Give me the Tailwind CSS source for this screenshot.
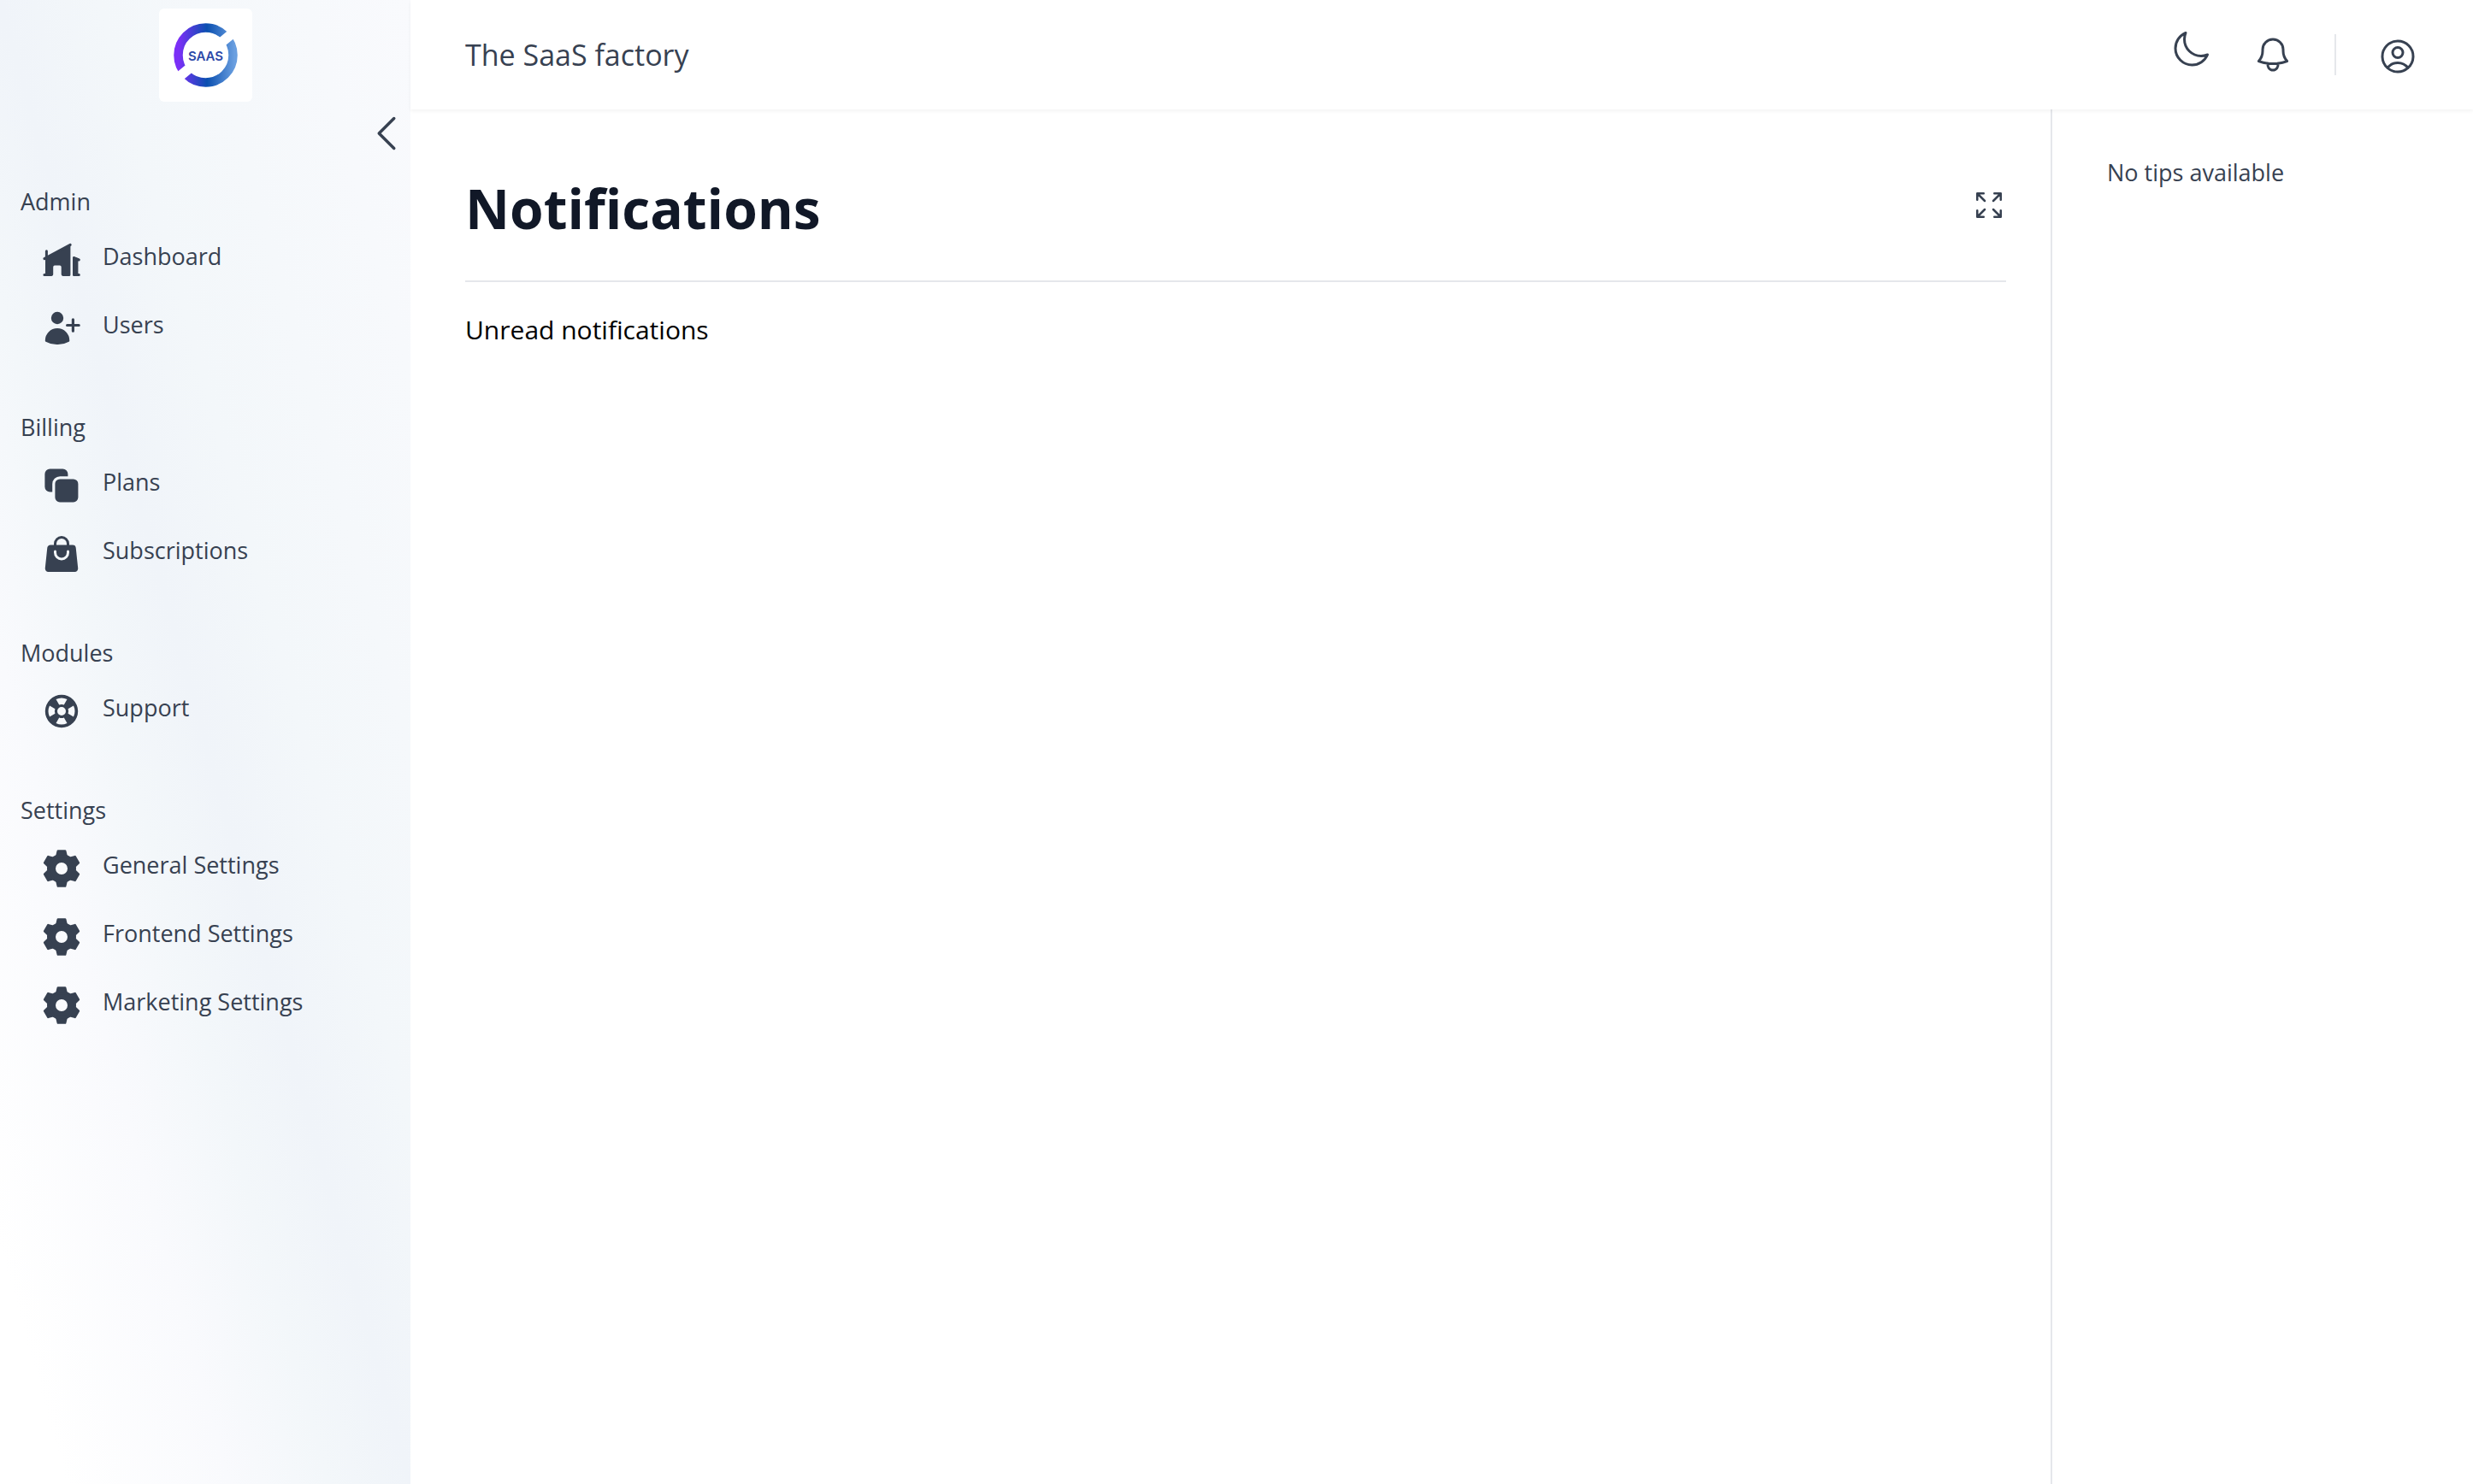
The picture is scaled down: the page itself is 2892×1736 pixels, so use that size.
<!DOCTYPE html>
<html lang="en">
<head>
<meta charset="utf-8">
<meta name="viewport" content="width=device-width, initial-scale=1">
<title>Notifications - The SaaS factory</title>
<script src="https://cdn.jsdelivr.net/npm/@tailwindcss/browser@4"></script>
</head>
<body class="bg-white font-['Open_Sans','Noto_Sans',sans-serif] text-[27px] leading-10 text-[#374151]">
<svg class="hidden" aria-hidden="true">
  <symbol id="gear" viewBox="-12 -12 24 24">
    <circle r="6" fill="none" stroke="currentColor" stroke-width="5"/>
    <g fill="currentColor" stroke="currentColor" stroke-width="1.2" stroke-linejoin="round">
      <path id="tooth" d="M-2.1-10.3H2.1L2.9-7H-2.9Z"/>
      <use href="#tooth" transform="rotate(60)"/>
      <use href="#tooth" transform="rotate(120)"/>
      <use href="#tooth" transform="rotate(180)"/>
      <use href="#tooth" transform="rotate(240)"/>
      <use href="#tooth" transform="rotate(300)"/>
    </g>
  </symbol>
</svg>
<div class="flex min-h-screen">
  <aside class="w-[480px] shrink-0 bg-[linear-gradient(to_top_right,#fff_8%,#f9fafd_28%,#f3f7fa_40%,#f0f4f9_50%,#f3f7fa_62%,#f9fafd_100%)]">
    <div class="flex h-32 items-center justify-center">
      <a href="#" aria-label="SaaS home" class="block size-[109px] rounded-md bg-white">
        <svg viewBox="0 0 109 109" class="size-full">
          <defs>
            <linearGradient id="ring" gradientUnits="userSpaceOnUse" x1="17" y1="0" x2="92" y2="0">
              <stop offset=".08" stop-color="#7b2ff7"/><stop offset=".52" stop-color="#0a4fb0"/><stop offset=".95" stop-color="#6a9fe0"/>
            </linearGradient>
          </defs>
          <circle cx="54.5" cy="54.5" r="32" fill="none" stroke="url(#ring)" stroke-width="10.5"/>
          <path d="M73 39.5 87 28M36 69.5 22 81" stroke="#fff" stroke-width="11.5"/>
          <text x="54.5" y="60.5" text-anchor="middle" fill="#2c48a8" class="font-['Inter',sans-serif] text-[15px] font-semibold">SAAS</text>
        </svg>
      </a>
    </div>
    <div class="flex justify-end">
      <button type="button" aria-label="Collapse sidebar" class="size-14">
        <svg viewBox="0 0 24 24" class="size-full" fill="none" stroke="currentColor" stroke-width="1.5" stroke-linecap="round" stroke-linejoin="round"><path d="M15.75 19.5 8.25 12l7.5-7.5"/></svg>
      </button>
    </div>
    <nav class="mt-8 flex flex-col gap-14 pb-14">
      <section>
        <h2 class="px-6">Admin</h2>
        <ul class="mt-2">
          <li><a href="#" class="flex items-start gap-6 py-4 pl-12">
            <svg viewBox="0 0 24 24" class="size-12 shrink-0" fill="currentColor">
              <path d="M2.5 11 17.2 3.3V20.7a.75.75 0 0 1-.75.75H12.75a.9.9 0 0 1-.9-.9V16.2a.9.9 0 0 0-.9-.9H8a.9.9 0 0 0-.9.9v4.35a.9.9 0 0 1-.9.9H2.5Z"/>
              <path d="M18.5 10.9a.7.7 0 0 1 1-.65l2.2.9v10.3h-2.45a.75.75 0 0 1-.75-.75Z"/>
              <path d="M1.95 11.3 17.1 3.2M3.2 6.9v4M1.95 20.75H4M19.3 10.8l2.85 1.2M19.5 20.75h2.65" fill="none" stroke="currentColor" stroke-width="1.5" stroke-linecap="round"/>
            </svg>
            <span>Dashboard</span></a></li>
          <li><a href="#" class="flex items-start gap-6 py-4 pl-12">
            <svg viewBox="0 0 24 24" class="size-12 shrink-0" fill="currentColor">
              <circle cx="9.5" cy="6" r="3.6"/>
              <path d="M2.4 19.125a7.125 7.125 0 0 1 14.25 0v.12a.75.75 0 0 1-.36.63 13.07 13.07 0 0 1-6.76 1.66 13.07 13.07 0 0 1-6.76-1.66.75.75 0 0 1-.37-.63Z"/>
              <path d="M18.7 6.9v6.7M15.3 10.25h6.8" fill="none" stroke="currentColor" stroke-width="1.6" stroke-linecap="round"/>
            </svg>
            <span>Users</span></a></li>
        </ul>
      </section>
      <section>
        <h2 class="px-6">Billing</h2>
        <ul class="mt-2">
          <li><a href="#" class="flex items-start gap-6 py-4 pl-12">
            <svg viewBox="0 0 24 24" class="size-12 shrink-0" fill="currentColor">
              <path d="M5.2 2.2h7.5a3 3 0 0 1 3 3v1.4h-4.6a4.5 4.5 0 0 0-4.5 4.5v4.6H5.2a3 3 0 0 1-3-3V5.2a3 3 0 0 1 3-3Z"/>
              <rect x="8.2" y="8.2" width="13.5" height="13.5" rx="2.8"/>
            </svg>
            <span>Plans</span></a></li>
          <li><a href="#" class="flex items-start gap-6 py-4 pl-12">
            <svg viewBox="0 0 24 24" class="size-12 shrink-0" fill="currentColor"><path fill-rule="evenodd" d="M7.5 6v.75H5.513c-.96 0-1.764.724-1.865 1.679l-1.263 12A1.875 1.875 0 0 0 4.25 22.5h15.5a1.875 1.875 0 0 0 1.865-2.071l-1.263-12a1.875 1.875 0 0 0-1.865-1.679H16.5V6a4.5 4.5 0 1 0-9 0ZM12 3a3 3 0 0 0-3 3v.75h6V6a3 3 0 0 0-3-3Zm-3 8.25a3 3 0 1 0 6 0v-.75a.75.75 0 0 1 1.5 0v.75a4.5 4.5 0 1 1-9 0v-.75a.75.75 0 0 1 1.5 0v.75Z"/></svg>
            <span>Subscriptions</span></a></li>
        </ul>
      </section>
      <section>
        <h2 class="px-6">Modules</h2>
        <ul class="mt-2">
          <li><a href="#" class="flex items-start gap-6 py-4 pl-12">
            <svg viewBox="-12 -12 24 24" class="size-12 shrink-0" fill="currentColor"><path fill-rule="evenodd" d="M0-9.6A9.6 9.6 0 1 1 0 9.6 9.6 9.6 0 1 1 0-9.6ZM0-2.5A2.5 2.5 0 1 0 0 2.5 2.5 2.5 0 1 0 0-2.5ZM-3.25-7A7.7 7.7 0 0 1 3.25-7L1.4-3.8A4 4 0 0 0-1.4-3.8ZM7-3.25A7.7 7.7 0 0 1 7 3.25L3.8 1.4A4 4 0 0 0 3.8-1.4ZM3.25 7A7.7 7.7 0 0 1-3.25 7L-1.4 3.8A4 4 0 0 0 1.4 3.8ZM-7 3.25A7.7 7.7 0 0 1-7-3.25L-3.8-1.4A4 4 0 0 0-3.8 1.4Z"/></svg>
            <span>Support</span></a></li>
        </ul>
      </section>
      <section>
        <h2 class="px-6">Settings</h2>
        <ul class="mt-2">
          <li><a href="#" class="flex items-start gap-6 py-4 pl-12"><svg class="size-12 shrink-0"><use href="#gear"/></svg><span>General Settings</span></a></li>
          <li><a href="#" class="flex items-start gap-6 py-4 pl-12"><svg class="size-12 shrink-0"><use href="#gear"/></svg><span>Frontend Settings</span></a></li>
          <li><a href="#" class="flex items-start gap-6 py-4 pl-12"><svg class="size-12 shrink-0"><use href="#gear"/></svg><span>Marketing Settings</span></a></li>
        </ul>
      </section>
    </nav>
  </aside>

  <div class="flex min-w-0 flex-1 flex-col">
    <header class="z-10 flex h-32 items-center justify-between bg-white px-16 shadow-[0_2px_4px_0_rgb(0_0_0/0.05)]">
      <p class="text-[34px]">The SaaS factory</p>
      <div class="flex items-center gap-12">
        <button type="button" aria-label="Toggle dark mode" class="pb-3">
          <svg viewBox="0 0 24 24" class="size-12" fill="none" stroke="currentColor" stroke-width="1.5" stroke-linecap="round" stroke-linejoin="round"><path d="M21.752 15.002A9.72 9.72 0 0 1 18 15.75c-5.385 0-9.75-4.365-9.75-9.75 0-1.33.266-2.597.748-3.752A9.753 9.753 0 0 0 3 11.25C3 16.635 7.365 21 12.75 21a9.753 9.753 0 0 0 9.002-5.998Z"/></svg>
        </button>
        <button type="button" aria-label="View notifications">
          <svg viewBox="0 0 24 24" class="size-12" fill="none" stroke="currentColor" stroke-width="1.5" stroke-linecap="round" stroke-linejoin="round"><path d="M14.857 17.082a23.848 23.848 0 0 0 5.454-1.31A8.967 8.967 0 0 1 18 9.75V9A6 6 0 0 0 6 9v.75a8.967 8.967 0 0 1-2.312 6.022c1.733.64 3.56 1.085 5.455 1.31m5.714 0a24.255 24.255 0 0 1-5.714 0m5.714 0a3 3 0 1 1-5.714 0"/></svg>
        </button>
        <div class="h-12 w-0.5 bg-[#e5e7eb]"></div>
        <button type="button" aria-label="Open user menu" class="pt-1">
          <svg viewBox="0 0 24 24" class="size-12" fill="none" stroke="currentColor" stroke-width="1.5" stroke-linecap="round" stroke-linejoin="round"><path d="M17.982 18.725A7.488 7.488 0 0 0 12 15.75a7.488 7.488 0 0 0-5.982 2.975m11.963 0a9 9 0 1 0-11.963 0m11.963 0A8.966 8.966 0 0 1 12 21a8.966 8.966 0 0 1-5.982-2.275M15 9.75a3 3 0 1 1-6 0 3 3 0 0 1 6 0Z"/></svg>
        </button>
      </div>
    </header>
    <div class="flex flex-1">
      <main class="min-w-0 flex-1 pt-20 pr-[52px] pl-16">
        <div class="flex items-start justify-between border-b-2 border-[#e5e7eb] pb-12">
          <h1 class="text-[64px] leading-[72px] font-bold text-[#111827]">Notifications</h1>
          <button type="button" aria-label="Expand content" class="mt-3">
            <svg viewBox="0 0 24 24" class="size-10" fill="none" stroke="currentColor" stroke-width="1.5" stroke-linecap="round" stroke-linejoin="round"><path d="M3.75 3.75v4.5m0-4.5h4.5m-4.5 0L9 9M3.75 20.25v-4.5m0 4.5h4.5m-4.5 0L9 15M20.25 3.75h-4.5m4.5 0v4.5m0-4.5L15 9m5.25 11.25h-4.5m4.5 0v-4.5m0 4.5L15 15"/></svg>
          </button>
        </div>
        <p class="mt-8 text-[30px] leading-12 text-black">Unread notifications</p>
      </main>
      <aside class="w-[494px] shrink-0 border-l-2 border-[#e5e7eb] px-16 pt-[54px]">
        <p>No tips available</p>
      </aside>
    </div>
  </div>
</div>
</body>
</html>
